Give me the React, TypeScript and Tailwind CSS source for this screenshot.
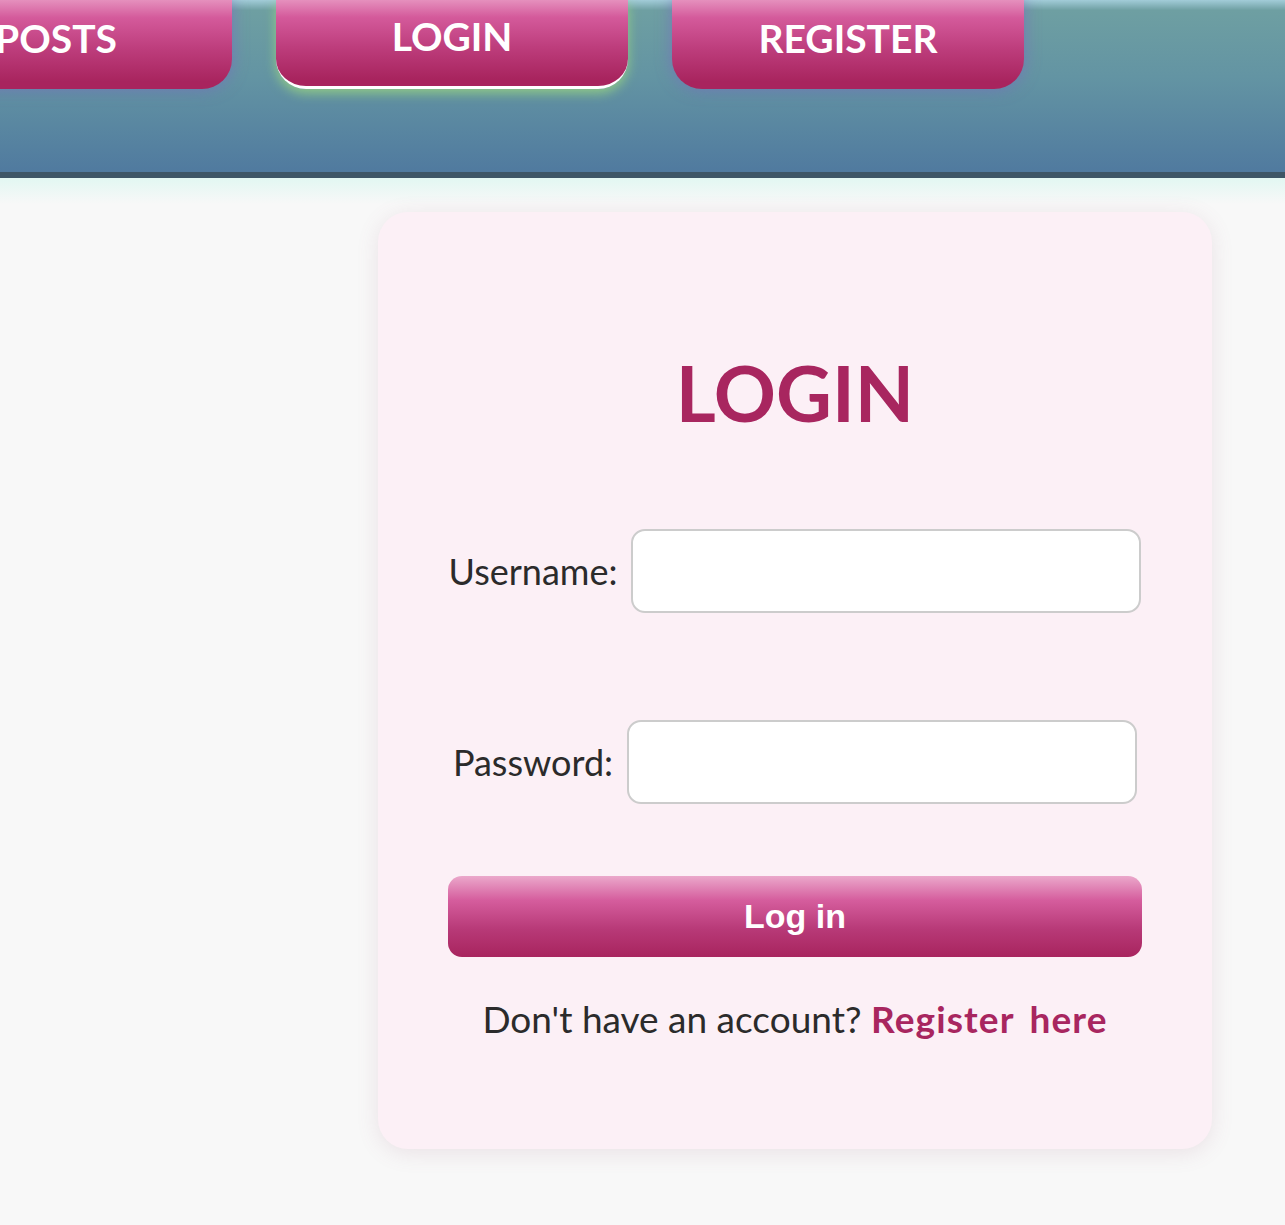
import React from "react";

const navItems = [
  { label: "POSTS", active: false },
  { label: "LOGIN", active: true },
  { label: "REGISTER", active: false },
];

const comic = "font-[family-name:'Comic_Sans_MS',Lato,sans-serif]";

const NavButton = ({ label, active }: { label: string; active: boolean }) => (
  <a
    href="#"
    className={`flex h-[89px] w-[352px] shrink-0 items-center justify-center rounded-b-[30px] bg-[linear-gradient(to_bottom,#e590bd_0%,#d45a9b_20%,#bd3d7c_55%,#a8245e_92%)] pb-[13px] text-[39px] font-bold text-white ${comic} ${
      active
        ? "border-b-[3px] border-white shadow-[0_4px_12px_rgba(150,210,130,0.9)]"
        : "shadow-[0_0_16px_rgba(120,110,190,0.75)]"
    }`}
  >
    {label}
  </a>
);

const App = () => {
  return (
    <div className={`min-h-screen bg-[#f8f8f8] ${comic}`}>
      <header className="h-[178px] border-b-[6px] border-[#3e5666] bg-[linear-gradient(to_bottom,#a2ccd8_0%,#6e9fa2_6%,#6394a3_45%,#507a9f_100%)]">
        <nav className="ml-[-120px] flex gap-[44px]">
          {navItems.map((item) => (
            <NavButton key={item.label} label={item.label} active={item.active} />
          ))}
        </nav>
      </header>
      <div className="h-[26px] bg-gradient-to-b from-[#e2f7f2] to-[#f8f8f8]" />

      <div className="pb-[76px] pt-[8px]">
        <div className="ml-[378px] w-[834px] rounded-[30px] bg-[#fcf0f6] px-[70px] pb-[102px] pt-[142px] shadow-[0_4px_22px_rgba(150,90,120,0.14)]">
          <h1 className="text-center text-[77px] font-bold leading-none text-[#a8265f]">
            LOGIN
          </h1>

          <form className="mt-[98px]" onSubmit={(e) => e.preventDefault()}>
            <div className="flex items-center justify-center gap-[14px]">
              <label htmlFor="username" className="text-[36px] text-[#2b2b2b]">
                Username:
              </label>
              <input
                id="username"
                type="text"
                className="h-[84px] w-[510px] rounded-[14px] border-2 border-[#cccccc] bg-white px-4 text-[28px] outline-none"
              />
            </div>

            <div className="mt-[107px] flex items-center justify-center gap-[14px]">
              <label htmlFor="password" className="text-[36px] text-[#2b2b2b]">
                Password:
              </label>
              <input
                id="password"
                type="password"
                className="h-[84px] w-[510px] rounded-[14px] border-2 border-[#cccccc] bg-white px-4 text-[28px] outline-none"
              />
            </div>

            <button
              type="submit"
              className="mt-[72px] flex h-[81px] w-full items-center justify-center rounded-[14px] bg-[linear-gradient(to_bottom,#eba8cb_0%,#d55d9d_30%,#b83a78_65%,#a8245e_100%)] font-['Liberation_Sans',Arial,sans-serif] text-[34px] font-bold text-white"
            >
              Log in
            </button>
          </form>

          <p className="mt-[34px] text-center text-[37px] text-[#2b2b2b]">
            Don't have an account?{" "}
            <a href="#" className="font-bold tracking-[0.03em] text-[#a8265f] [word-spacing:0.15em]">
              Register here
            </a>
          </p>
        </div>
      </div>
    </div>
  );
};

export default App;
